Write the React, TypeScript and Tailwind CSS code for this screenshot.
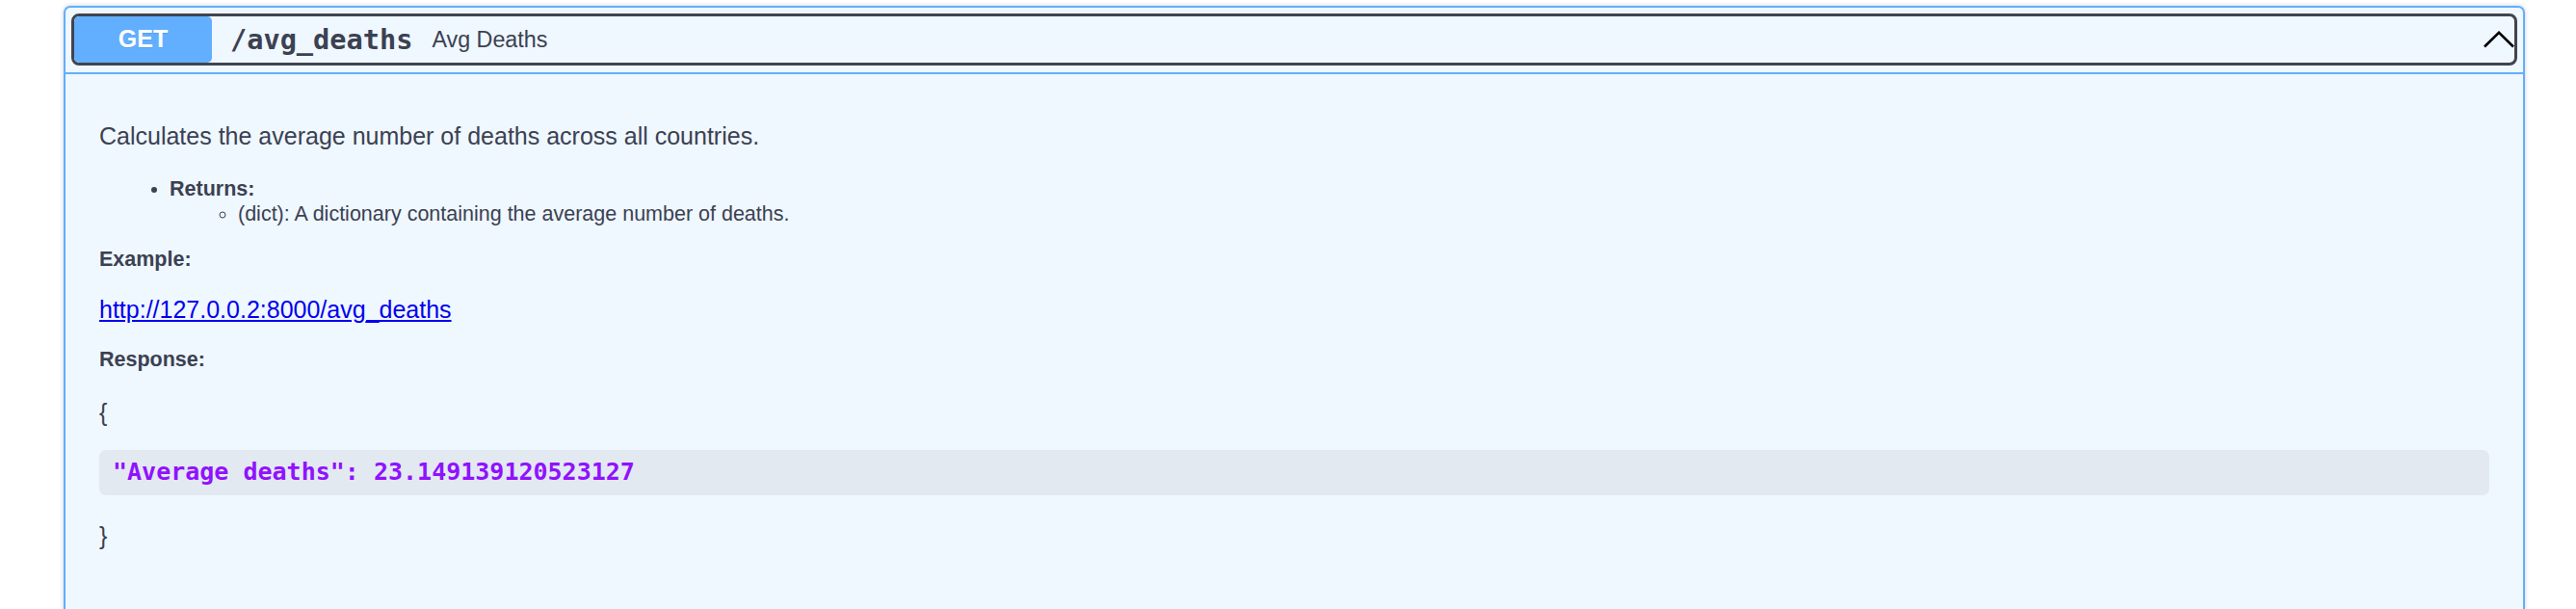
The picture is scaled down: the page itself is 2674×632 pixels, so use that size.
export default function App() {
    return (
        <div className="min-h-screen bg-white pt-[6px] pl-[66px] pr-[53px]" style={{ fontFamily: '"Liberation Sans", Arial, sans-serif' }}>
            <div className="border-2 border-[#61affe] rounded-[7px] bg-[#eff7ff] shadow-[0_0_5px_rgba(0,0,0,0.19)] overflow-hidden">
                {/* summary */}
                <div className="px-[6px] pt-[6px] pb-[7px] border-b-2 border-[#61affe]">
                    <div className="flex items-center border-[3px] border-[#41444e] rounded-[8px] overflow-hidden">
                        <div className="w-[143px] h-[48px] flex items-center justify-center bg-[#61affe] rounded-[5px] text-white font-bold text-[25px] [text-shadow:0_1px_0_rgba(0,0,0,0.1)]">
                            GET
                        </div>
                        <span
                            className="ml-[19px] text-[28.6px] font-bold text-[#3b4151]"
                            style={{ fontFamily: '"DejaVu Sans Mono", monospace' }}
                        >
                            /avg_deaths
                        </span>
                        <span className="ml-[20px] text-[23.3px] text-[#3b4151]">Avg Deaths</span>
                        <div className="flex-1" />
                        <svg className="w-[32px] h-[18px]" viewBox="0 0 32 18" fill="none">
                            <polyline points="1,16.5 16,1.8 31,16.5" stroke="#000" strokeWidth="2.6" />
                        </svg>
                    </div>
                </div>

                {/* body */}
                <div className="px-[35px] pt-[50px] pb-[120px] text-[#3b4151]">
                    <p className="text-[25px] leading-[28px]">Calculates the average number of deaths across all countries.</p>
                    <ul className="mt-[28px] list-disc pl-[73px] text-[21.5px] leading-[26px]">
                        <li>
                            <strong>Returns:</strong>
                            <ul className="list-[circle] pl-[71px]">
                                <li>(dict): A dictionary containing the average number of deaths.</li>
                            </ul>
                        </li>
                    </ul>
                    <p className="mt-[22px] text-[21.5px] leading-[24px] font-bold">Example:</p>
                    <p className="mt-[26px] text-[25px] leading-[28px]">
                        <a href="#" className="text-[#0000ee] underline">http://127.0.0.2:8000/avg_deaths</a>
                    </p>
                    <p className="mt-[26px] text-[21.5px] leading-[24px] font-bold">Response:</p>
                    <p className="mt-[29px] text-[25px] leading-[28px]">{'{'}</p>
                    <pre className="mt-[25px] bg-[#e3e9f1] rounded-[7px] px-[14px] py-[8px]">
                        <code
                            className="text-[25px] leading-[30px] font-bold text-[#9012fe]"
                            style={{ fontFamily: '"DejaVu Sans Mono", monospace' }}
                        >
                            "Average deaths": 23.149139120523127
                        </code>
                    </pre>
                    <p className="mt-[28px] text-[25px] leading-[28px]">{'}'}</p>
                </div>
            </div>
        </div>
    );
}
